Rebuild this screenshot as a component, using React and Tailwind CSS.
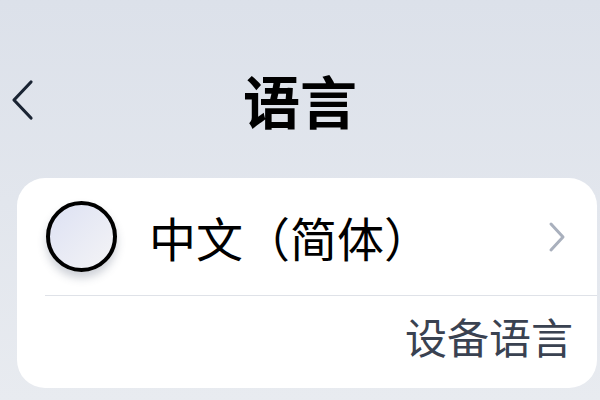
import React from "react";

const font = { fontFamily: '"Noto Sans CJK SC", "Noto Sans", sans-serif' };

const App = () => {
  return (
    <div
      className="w-[600px] h-[400px] overflow-hidden bg-gradient-to-b from-[#dce1ea] to-[#e8ebf0] flex flex-col"
      style={font}
    >
      {/* header */}
      <div className="relative h-[104px] mt-[50px] flex items-center justify-center">
        <button className="absolute left-[9px] top-[28px] w-[26px] h-[44px] flex items-center justify-center">
          <svg width="24" height="42" viewBox="0 0 24 42" fill="none">
            <path d="M21 3 L4 21 L21 39" stroke="#1a2433" strokeWidth="3.2" strokeLinecap="round" strokeLinejoin="round" />
          </svg>
        </button>
        <h1 className="text-[57px] font-bold text-black leading-none mb-[6px]">语言</h1>
      </div>

      {/* card */}
      <div className="ml-[17px] mr-[3px] mt-[24px] bg-white rounded-[28px] h-[210px] flex flex-col">
        <div className="flex items-center h-[117px] pl-[29px] pr-[30px]">
          <div className="w-[71px] h-[71px] rounded-full border-[4px] border-black bg-gradient-to-br from-[#dde1f3] to-[#f4f4f6] shadow-[0_6px_8px_rgba(60,70,100,0.25)]" />
          <span className="ml-[32px] text-[47px] text-black leading-none flex-1">中文（简体）</span>
          <svg width="20" height="32" viewBox="0 0 20 32" fill="none">
            <path d="M4 3 L16 16 L4 29" stroke="#a9b0bd" strokeWidth="3" strokeLinecap="round" strokeLinejoin="round" />
          </svg>
        </div>
        <div className="ml-[28px] h-[1px] bg-[#dfe2e8]" />
        <div className="flex-1 flex items-center justify-end pr-[24px]">
          <span className="text-[42px] leading-none text-[#3a4251] mb-[12px]">设备语言</span>
        </div>
      </div>
    </div>
  );
};

export default App;
